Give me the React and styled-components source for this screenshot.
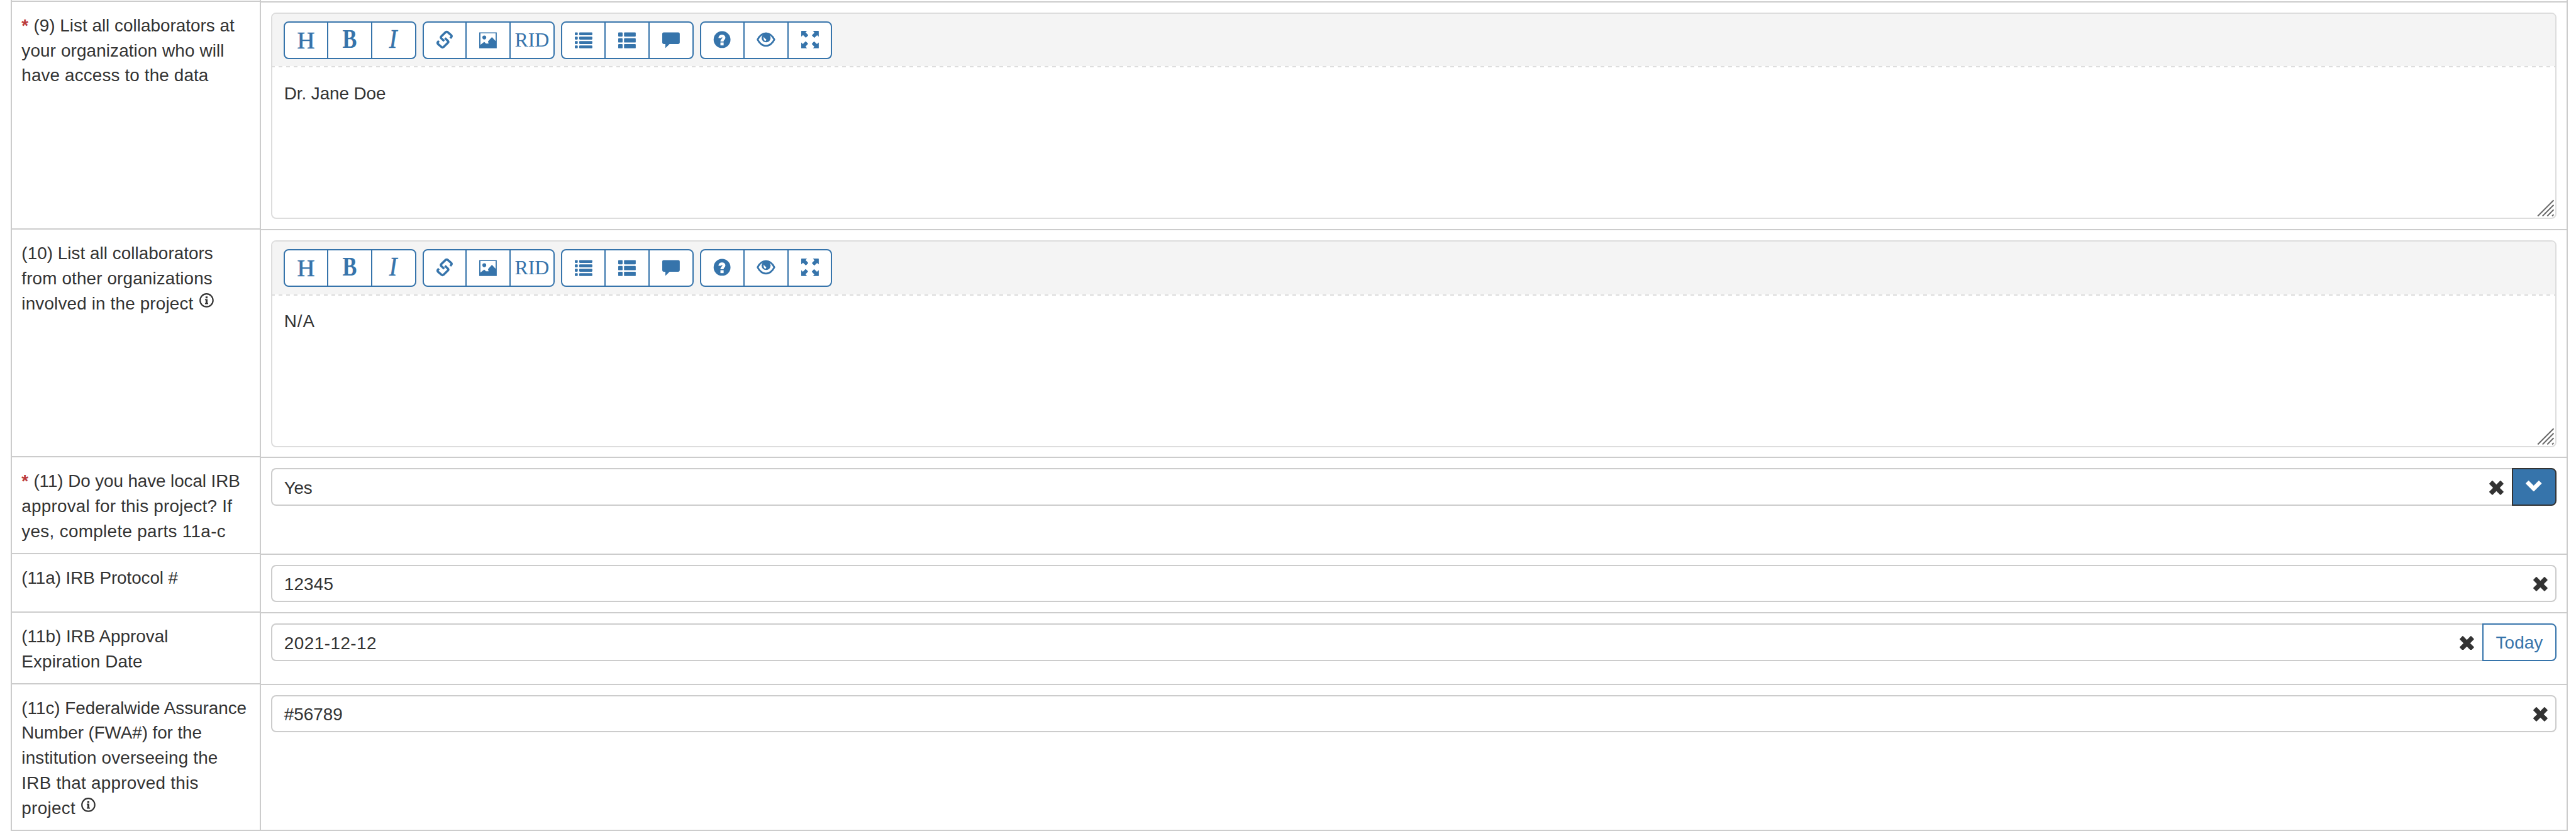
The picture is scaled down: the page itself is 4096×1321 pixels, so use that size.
import React from "react";
import styled, { createGlobalStyle, css } from "styled-components";

const SCALE = 4096 / 4116;
const u = (...values) => values.map((n) => `${+(n * SCALE).toFixed(3)}px`).join(" ");

const colors = {
  blue: "#3674ab",
  text: "#333333",
  line: "#cccccc",
  editorLine: "#dddddd",
  toolbar: "#f4f4f4",
  required: "#bb3a3b",
};

const GlobalStyle = createGlobalStyle`
  *, *::before, *::after { box-sizing: border-box; }
  html, body { margin: 0; background: #fff; }
  body {
    height: 1321px;
    overflow: hidden;
    font-family: "Liberation Sans", Arial, Helvetica, sans-serif;
    font-size: ${u(28)};
    line-height: ${u(40)};
    color: ${colors.text};
  }
`;

const Page = styled.main`
  height: 1321px;
  padding: ${u(0, 13, 0, 17)};
  overflow: hidden;
`;

const Table = styled.div`
  display: flex;
  flex-direction: column;
  height: 1321px;
  padding-top: ${u(1)};
  border-left: 2px solid ${colors.line};
  border-right: 2px solid ${colors.line};
  background: linear-gradient(${colors.line}, ${colors.line}) ${u(396)} 0 / 2px 100% no-repeat;
`;

const Row = styled.div`
  display: flex;
  flex: none;
  gap: 2px;
  height: ${(p) => u(p.$height)};
`;

const LabelCell = styled.div`
  flex: none;
  width: ${u(396)};
  border-top: 2px solid ${colors.line};
  padding: ${u(18, 0, 0, 15.5)};
  white-space: nowrap;
`;

const FieldCell = styled.div`
  flex: 1;
  margin-top: ${u(1)};
  border-top: 2px solid ${colors.line};
  padding: ${u(16, 16, 0, 16)};
`;

const Line = styled.div`
  display: flex;
  height: ${u(40)};
`;

const Text = styled.span`
  white-space: pre;
  letter-spacing: ${(p) => p.$tracking || 0}px;
`;

const Required = styled.span`
  width: ${u(19.2)};
  font-weight: 700;
  color: ${colors.required};
`;

const InfoSvg = styled.svg`
  width: ${u(23)};
  height: ${u(23)};
  margin: ${u(3, 0, 0, 9.5)};
`;

const EditorBox = styled.section`
  position: relative;
  height: ${u(330)};
  border: 2px solid ${colors.editorLine};
  border-radius: ${u(8)};
  overflow: hidden;
`;

const Toolbar = styled.div`
  display: flex;
  gap: ${u(10)};
  height: ${u(86)};
  padding: ${u(12, 18)};
  background:
    repeating-linear-gradient(90deg, ${colors.editorLine} 0 ${u(4)}, #fff ${u(4)} ${u(10)}, ${colors.editorLine} ${u(10)} ${u(12)})
      0 100% / 100% 2px no-repeat,
    ${colors.toolbar};
`;

const Group = styled.div`
  display: flex;
  width: ${(p) => u(p.$width)};
  height: ${u(60)};
  border: 2px solid ${colors.blue};
  border-radius: ${u(8)};
  background: #fff;
  overflow: hidden;
`;

const Tool = styled.button`
  display: flex;
  flex: 1;
  justify-content: center;
  align-items: flex-start;
  margin: 0;
  padding: ${u(13)} 0 0;
  border: 0;
  background: none;
  color: ${colors.blue};

  & + & {
    flex: none;
    width: ${u(70)};
    border-left: 2px solid ${colors.blue};
  }
`;

const ToolSvg = styled.svg`
  flex: none;
  width: ${u(28)};
  height: ${u(28)};
  overflow: visible;
  fill: currentColor;
`;

const glyphs = {
  heading: css`
    font-size: ${u(39)};
    margin-top: ${u(1)};
    -webkit-text-stroke: 0.7px ${colors.blue};
  `,
  bold: css`
    font-size: ${u(42)};
    font-weight: 700;
    transform: scaleX(0.82);
  `,
  italic: css`
    font-size: ${u(42)};
    font-style: italic;
    transform: translateX(${u(-1)}) scaleX(0.9);
    -webkit-text-stroke: 0.6px ${colors.blue};
  `,
  rid: css`
    font-size: ${u(32)};
    margin-top: ${u(1)};
  `,
};

const Letter = styled.span`
  font-family: "Liberation Serif", "Times New Roman", serif;
  line-height: ${u(28)};
  ${(p) => glyphs[p.$kind]}
`;

const EditorText = styled.div`
  padding: ${u(21.5, 19)};
`;

const Grip = styled.svg`
  position: absolute;
  right: ${u(1)};
  bottom: ${u(1)};
  width: ${u(28)};
  height: ${u(28)};
`;

const InputGroup = styled.div`
  display: flex;
  height: ${u(60)};
`;

const Input = styled.div`
  display: flex;
  flex: 1;
  justify-content: space-between;
  border: 2px solid ${colors.line};
  border-radius: ${(p) => (p.$joined ? `${u(8)} 0 0 ${u(8)}` : u(8))};
  border-right-width: ${(p) => (p.$joined ? 0 : 2)}px;
  padding: ${(p) => u(9.5, p.$joined ? 12.5 : 12.3, 0, 19)};
`;

const ClearSvg = styled.svg`
  width: ${u(23)};
  height: ${u(23)};
  margin-top: ${u(8)};
  fill: ${colors.text};
`;

const Addon = styled.button`
  display: flex;
  justify-content: center;
  width: ${(p) => u(p.$width)};
  margin: 0;
  padding: ${u(9)} 0 0;
  border: 2px solid ${(p) => (p.$solid ? colors.text : colors.blue)};
  border-radius: 0 ${u(8)} ${u(8)} 0;
  background: ${(p) => (p.$solid ? colors.blue : "#fff")};
  color: ${(p) => (p.$solid ? "#fff" : colors.blue)};
  font: inherit;
`;

const ChevronSvg = styled.svg`
  width: ${u(25.6)};
  height: ${u(17.3)};
  margin: ${u(9, 0, 0, -1)};
  fill: currentColor;
`;

const linkHalf = "M13.4 16.4 L8.8 12 Q7.3 10.4 8.8 8.8 L15.6 2.2 Q17.4 .8 19.2 2.4 L24.6 7 Q26 8.6 24.4 10.4 L23 11.8";

const shapes = {
  link: (
    <g fill="none" stroke="currentColor" strokeWidth="3.6">
      <path d={linkHalf} />
      <path d={linkHalf} transform="rotate(180 14 14)" />
    </g>
  ),
  picture: (
    <>
      <path fillRule="evenodd" d="M0 2.4H28V28H0ZM1.9 4V22.4L8 17.6L10.8 20.4L15 20.4L14 17L15.6 15.2L20.3 10L26.2 16.4V4Z" />
      <circle cx="8.1" cy="10.6" r="3.1" />
    </>
  ),
  list: [2.4, 9.4, 16.4, 23.4].map((y) => (
    <React.Fragment key={y}>
      <rect x="0" y={y} width="4.7" height="4.6" rx="1.1" />
      <rect x="7" y={y} width="21" height="4.6" rx="1.1" />
    </React.Fragment>
  )),
  thList: [2.4, 11.8, 21.1].map((y) => (
    <React.Fragment key={y}>
      <rect x="0" y={y} width="7" height="6.9" rx="1.2" />
      <rect x="9.3" y={y} width="18.7" height="6.9" rx="1.2" />
    </React.Fragment>
  )),
  comment: <path d="M2.3 2.4H25.7Q28 2.4 28 4.7V18.7Q28 21 25.7 21H11.7L5.8 27Q5 27.8 5 26.8V21H2.3Q0 21 0 18.7V4.7Q0 2.4 2.3 2.4Z" />,
  question: (
    <>
      <circle cx="14.2" cy="14" r="13.5" />
      <path fill="#fff" d="M8.5 11.6C8.6 8.2 11 6.3 14.1 6.3C17.3 6.3 19.5 8.2 19.5 10.9C19.5 14.2 16.7 14.5 16.7 17.2H11.6C11.6 13.2 14.7 12.8 14.7 10.8C14.7 10 13.3 9.9 13 11.6Z" />
      <rect x="11.6" y="18.6" width="5.1" height="4.7" fill="#fff" />
    </>
  ),
  eye: (
    <>
      <path
        fill="none"
        stroke="currentColor"
        strokeWidth="2.8"
        strokeLinejoin="round"
        d="M.6 14C4 7.6 8.6 4 14 4S24 7.6 27.4 14C24 20.6 19.4 24 14 24S4 20.6 .6 14Z"
      />
      <circle cx="14.2" cy="11.2" r="7.2" />
      <path fill="#fff" d="M10.4 9.6Q12.4 13.4 14.6 13.8Q14.4 16.4 12.4 16.2Q9.6 14.2 10.4 9.6Z" />
    </>
  ),
  fullscreen: [0, 90, 180, 270].map((angle) => (
    <path
      key={angle}
      transform={`rotate(${angle} 14 14)`}
      d="M.7 0H9.3L7 2.6L10.9 6.6Q11.3 7.1 10.9 7.5L7.9 10.6Q7.4 11 6.9 10.6L2.9 6.9L0 9.3V.7Q0 0 .7 0Z"
    />
  )),
};

const Glyph = ({ name }) => <ToolSvg viewBox="0 0 28 28">{shapes[name]}</ToolSvg>;

const toolGroups = [
  {
    width: 212,
    tools: [
      <Letter $kind="heading">H</Letter>,
      <Letter $kind="bold">B</Letter>,
      <Letter $kind="italic">I</Letter>,
    ],
  },
  { width: 211, tools: [<Glyph name="link" />, <Glyph name="picture" />, <Letter $kind="rid">RID</Letter>] },
  { width: 212, tools: [<Glyph name="list" />, <Glyph name="thList" />, <Glyph name="comment" />] },
  { width: 212, tools: [<Glyph name="question" />, <Glyph name="eye" />, <Glyph name="fullscreen" />] },
];

const Info = () => (
  <InfoSvg viewBox="0 0 23 23">
    <circle cx="11.5" cy="11.5" r="10.3" fill="none" stroke={colors.text} strokeWidth="2.2" />
    <path fill={colors.text} d="M9.9 5.2H13.1V8.2H9.9ZM9 9.6H13.1V15.8H14.1V17.6H9V15.8H10V11.4H9Z" />
  </InfoSvg>
);

const Clear = () => (
  <ClearSvg viewBox="0 0 23 23">
    <path d="M.3 5.6Q-.2 5 .3 4.4L4.4 .3Q5 -.2 5.6 .3L11.5 6.2L17.4 .3Q18 -.2 18.6 .3L22.7 4.4Q23.2 5 22.7 5.6L16.8 11.5L22.7 17.4Q23.2 18 22.7 18.6L18.6 22.7Q18 23.2 17.4 22.7L11.5 16.8L5.6 22.7Q5 23.2 4.4 22.7L.3 18.6Q-.2 18 .3 17.4L6.2 11.5Z" />
  </ClearSvg>
);

const Label = ({ lines, required, info }) => (
  <LabelCell>
    {lines.map(([text, tracking], i) => (
      <Line key={text}>
        {required && i === 0 && <Required>*</Required>}
        <Text $tracking={tracking}>{text}</Text>
        {info && i === lines.length - 1 && <Info />}
      </Line>
    ))}
  </LabelCell>
);

const Editor = ({ text, tracking }) => (
  <EditorBox>
    <Toolbar>
      {toolGroups.map((group, g) => (
        <Group key={g} $width={group.width}>
          {group.tools.map((tool, t) => (
            <Tool key={t}>{tool}</Tool>
          ))}
        </Group>
      ))}
    </Toolbar>
    <EditorText>
      <Text $tracking={tracking}>{text}</Text>
    </EditorText>
    <Grip viewBox="0 0 28 28">
      <path d="M1.2 26.6L26.6 1.2M8.8 26.6L26.6 8.8M16.4 26.6L26.6 16.4M24.2 26.6L26.6 24.2" fill="none" stroke="#6a6a6a" strokeWidth="2" />
    </Grip>
  </EditorBox>
);

const Field = ({ text, tracking, addon }) => (
  <InputGroup>
    <Input $joined={Boolean(addon)}>
      <Text $tracking={tracking}>{text}</Text>
      <Clear />
    </Input>
    {addon === "select" && (
      <Addon $width={72} $solid>
        <ChevronSvg viewBox="0 0 25.6 17.3">
          <path d="M.3 5.1Q-.1 4.6 .3 4.1L4.1 .3Q4.6 -.1 5.1 .3L12.8 8L20.5 .3Q21 -.1 21.5 .3L25.3 4.1Q25.7 4.6 25.3 5.1L13.3 17Q12.8 17.4 12.3 17Z" />
        </ChevronSvg>
      </Addon>
    )}
    {addon === "today" && (
      <Addon $width={119}>
        <Text $tracking={0.06}>Today</Text>
      </Addon>
    )}
  </InputGroup>
);

export default function App() {
  return (
    <Page>
      <GlobalStyle />
      <Table>
        <Row $height={364}>
          <Label
            required
            lines={[
              ["(9) List all collaborators at", 0.011],
              ["your organization who will", 0.125],
              ["have access to the data", 0.126],
            ]}
          />
          <FieldCell>
            <Editor text="Dr. Jane Doe" tracking={-0.08} />
          </FieldCell>
        </Row>
        <Row $height={364}>
          <Label
            info
            lines={[
              ["(10) List all collaborators", 0.037],
              ["from other organizations", 0.132],
              ["involved in the project", 0.157],
            ]}
          />
          <FieldCell>
            <Editor text="N/A" tracking={0.9} />
          </FieldCell>
        </Row>
        <Row $height={154}>
          <Label
            required
            lines={[
              ["(11) Do you have local IRB", -0.099],
              ["approval for this project? If", 0.226],
              ["yes, complete parts 11a-c", 0.31],
            ]}
          />
          <FieldCell>
            <Field text="Yes" tracking={-0.3} addon="select" />
          </FieldCell>
        </Row>
        <Row $height={94}>
          <Label lines={[["(11a) IRB Protocol #", -0.081]]} />
          <FieldCell>
            <Field text="12345" tracking={0.164} />
          </FieldCell>
        </Row>
        <Row $height={114}>
          <Label
            lines={[
              ["(11b) IRB Approval", -0.017],
              ["Expiration Date", 0.114],
            ]}
          />
          <FieldCell>
            <Field text="2021-12-12" tracking={0.475} addon="today" />
          </FieldCell>
        </Row>
        <Row $height={234}>
          <Label
            info
            lines={[
              ["(11c) Federalwide Assurance", -0.039],
              ["Number (FWA#) for the", -0.092],
              ["institution overseeing the", 0.151],
              ["IRB that approved this", 0.258],
              ["project", 0.285],
            ]}
          />
          <FieldCell>
            <Field text="#56789" tracking={0.016} />
          </FieldCell>
        </Row>
        <Row $height={4}>
          <LabelCell />
          <FieldCell />
        </Row>
      </Table>
    </Page>
  );
}
